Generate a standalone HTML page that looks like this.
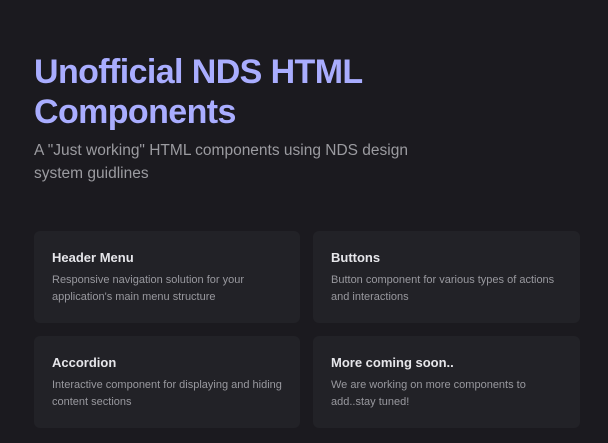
<!DOCTYPE html>
<html><head><style>
body{margin:0;background:#1b1a1f;width:608px;height:443px;overflow:hidden;font-family:"Liberation Sans",sans-serif;}
h1{position:absolute;left:34px;top:52px;margin:0;font-size:34px;line-height:40px;color:#a9adff;font-weight:bold;letter-spacing:-0.6px;width:400px}
.sub{position:absolute;left:34px;top:139px;margin:0;font-size:15.5px;line-height:23px;color:#9b9ba0;width:400px}
.card{position:absolute;width:266px;height:92px;background:#222227;border-radius:6px;box-sizing:border-box;padding:19px 18px}
.card b{display:block;color:#e6e6ea;font-size:13px;font-weight:bold;line-height:16px;margin-bottom:6px}
.card p{margin:0;color:#98989e;font-size:11px;line-height:17px}
</style></head><body>
<h1>Unofficial NDS HTML Components</h1>
<p class="sub">A "Just working" HTML components using NDS design system guidlines</p>
<div class="card" style="left:34px;top:231px"><b>Header Menu</b><p>Responsive navigation solution for your application's main menu structure</p></div>
<div class="card" style="left:313px;top:231px;width:267px"><b>Buttons</b><p>Button component for various types of actions and interactions</p></div>
<div class="card" style="left:34px;top:336px"><b>Accordion</b><p>Interactive component for displaying and hiding content sections</p></div>
<div class="card" style="left:313px;top:336px;width:267px"><b>More coming soon..</b><p>We are working on more components to add..stay tuned!</p></div>
</body></html>
